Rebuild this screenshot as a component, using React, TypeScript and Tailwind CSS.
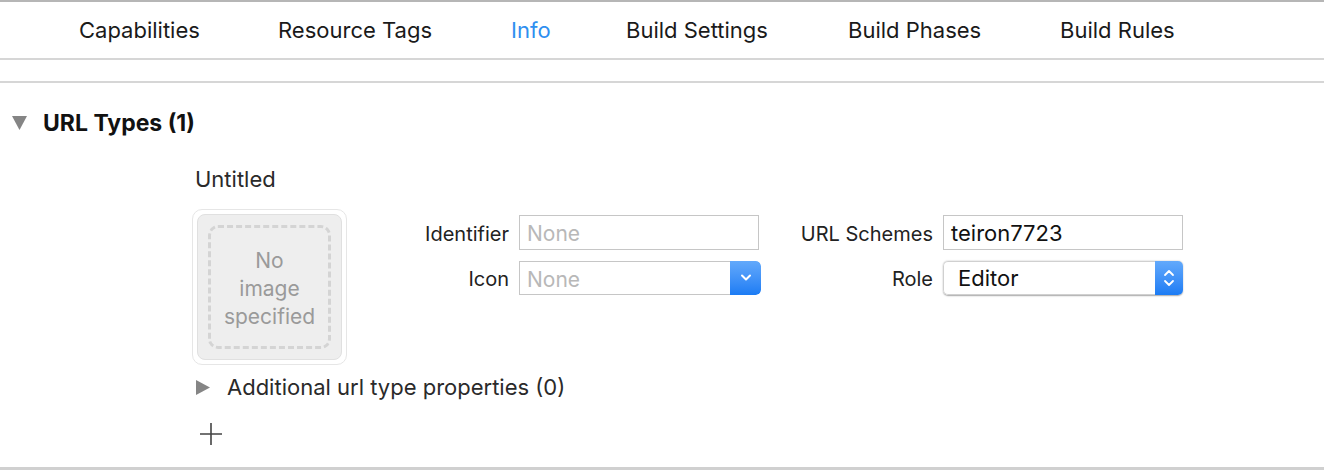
import React from "react";

const font = { fontFamily: '"Inter", "Liberation Sans", sans-serif' };

function Chevron() {
  return (
    <svg width="12" height="8" viewBox="0 0 12 8">
      <path d="M2 1.5 L6 5.5 L10 1.5" fill="none" stroke="white" strokeWidth="2" strokeLinecap="round" strokeLinejoin="round" />
    </svg>
  );
}

function UpDown() {
  return (
    <svg width="12" height="20" viewBox="0 0 12 20">
      <path d="M2 7 L6 3 L10 7" fill="none" stroke="white" strokeWidth="1.8" strokeLinecap="round" strokeLinejoin="round" />
      <path d="M2 13 L6 17 L10 13" fill="none" stroke="white" strokeWidth="1.8" strokeLinecap="round" strokeLinejoin="round" />
    </svg>
  );
}

export default function App() {
  const tabs = ["Capabilities", "Resource Tags", "Info", "Build Settings", "Build Phases", "Build Rules"];
  const tabX = [79, 278, 511, 626, 848, 1060];
  return (
    <div className="w-[1324px] h-[470px] bg-white overflow-hidden flex flex-col text-[#1d1d1d]" style={font}>
      <div className="h-[2px] bg-[#b6b6b6]" />
      <div className="h-[56px] relative">
        {tabs.map((t, i) => (
          <span
            key={t}
            className={`absolute top-[14px] text-[22px] leading-[28px] ${t === "Info" ? "text-[#2f8ff0]" : "text-[#1a1a1a]"}`}
            style={{ left: tabX[i] }}
          >
            {t}
          </span>
        ))}
      </div>
      <div className="h-[2px] bg-[#d6d6d6]" />
      <div className="h-[21px]" />
      <div className="h-[2px] bg-[#d6d6d6]" />
      <div className="flex-1 flex flex-col">
        <div className="flex items-center h-[26px] mt-[27px] pl-[12px]">
          <svg width="15" height="14" viewBox="0 0 15 14">
            <path d="M0 0 H15 L7.5 14 Z" fill="#858585" />
          </svg>
          <span className="ml-[16px] text-[23px] leading-[26px] font-bold text-[#111]">URL Types (1)</span>
        </div>
        <div className="pl-[195px] mt-[30px] text-[22px] leading-[26px] text-[#2a2a2a]">Untitled</div>
        <div className="flex items-start pl-[192px] mt-[17px]">
          <div className="w-[155px] h-[156px] rounded-[10px] border border-[#e6e6e6] bg-white p-[4px]">
            <div className="w-full h-full rounded-[8px] bg-[#eeeeee] border border-[#e0e0e0] p-[10px]">
              <div className="w-full h-full rounded-[10px] border-[3px] border-dashed border-[#d4d4d4] flex flex-col items-center justify-center pt-[3px] text-[21px] leading-[28px] text-[#9a9a9a]">
                <span>No</span>
                <span>image</span>
                <span>specified</span>
              </div>
            </div>
          </div>
          <div className="ml-[7px] mt-[6px] grid grid-cols-[155px_242px] gap-x-[10px] gap-y-[11px] items-center">
            <span className="text-right text-[20px] text-[#222] pt-[3px]">Identifier</span>
            <div className="h-[35px] w-[240px] border border-[#c6c6c6] bg-white flex items-center pl-[7px] pt-[3px] text-[21px] text-[#b8b8b8]">None</div>
            <span className="text-right text-[20px] text-[#222] pt-[2px]">Icon</span>
            <div className="h-[34px] w-[242px] flex rounded-r-[5px] overflow-hidden">
              <div className="flex-1 border border-[#c6c6c6] border-r-0 bg-white flex items-center pl-[7px] pt-[3px] text-[21px] text-[#b8b8b8]">None</div>
              <div className="w-[31px] bg-gradient-to-b from-[#62a9fb] to-[#1b7cf4] flex items-center justify-center rounded-r-[5px]">
                <Chevron />
              </div>
            </div>
          </div>
          <div className="mt-[6px] grid grid-cols-[172px_240px] gap-x-[10px] gap-y-[11px] items-center">
            <span className="text-right text-[20px] text-[#222] pt-[3px]">URL Schemes</span>
            <div className="h-[35px] w-[240px] border border-[#c6c6c6] bg-white flex items-center pl-[7px] pt-[2px] text-[22px] text-[#111]">teiron7723</div>
            <span className="text-right text-[20px] text-[#222] pt-[2px]">Role</span>
            <div className="h-[34px] w-[240px] flex rounded-[5px] overflow-hidden shadow-[0_0.5px_1.5px_rgba(0,0,0,0.35)]">
              <div className="flex-1 border border-[#d0d0d0] border-r-0 rounded-l-[5px] bg-white flex items-center pl-[14px] text-[22px] text-[#111]">Editor</div>
              <div className="w-[28px] bg-gradient-to-b from-[#62a9fb] to-[#1b7cf4] flex items-center justify-center">
                <UpDown />
              </div>
            </div>
          </div>
        </div>
        <div className="flex items-center pl-[196px] mt-[9px] h-[26px]">
          <svg width="14" height="15" viewBox="0 0 14 15">
            <path d="M0 0 L14 7.5 L0 15 Z" fill="#858585" />
          </svg>
          <span className="ml-[17px] text-[22px] leading-[26px] text-[#2a2a2a]">Additional url type properties (0)</span>
        </div>
        <div className="pl-[200px] mt-[23px]">
          <svg width="22" height="22" viewBox="0 0 22 22" className="block">
            <path d="M11 0 V22 M0 11 H22" stroke="#444" strokeWidth="1.6" />
          </svg>
        </div>
      </div>
      <div className="h-[3px] bg-[#d0d0d0]" />
    </div>
  );
}
